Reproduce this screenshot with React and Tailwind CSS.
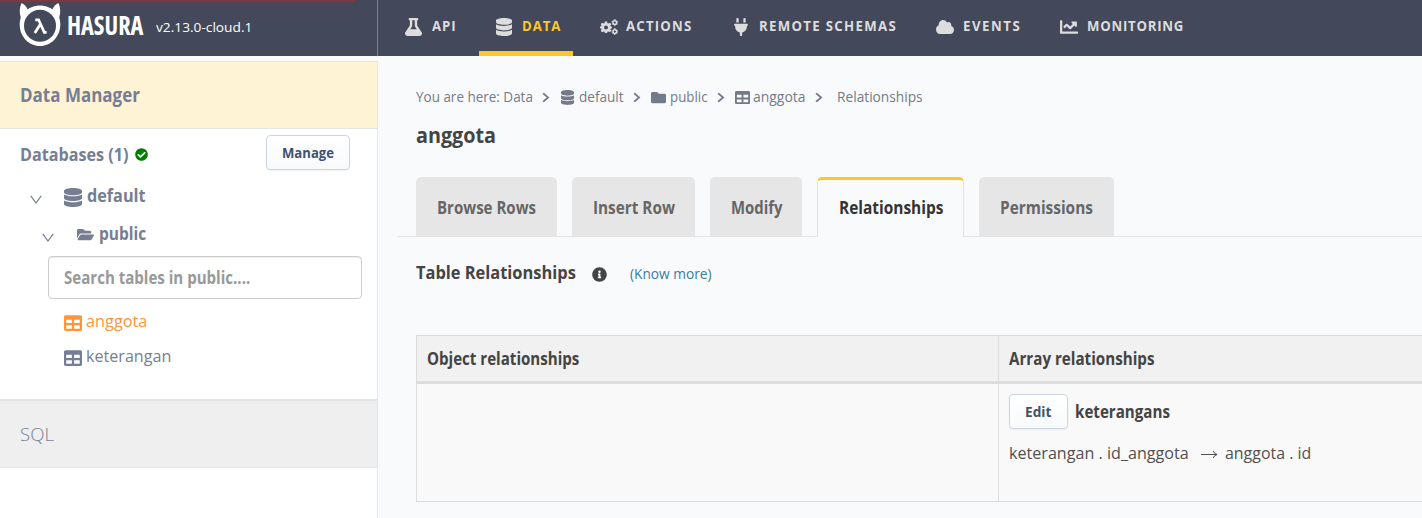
import React from 'react';
import { FaFlask, FaPlug, FaCloud } from 'react-icons/fa6';
import { FaDatabase, FaChartLine, FaChevronRight, FaFolder, FaFolderOpen, FaTable, FaInfoCircle, FaCheckCircle } from 'react-icons/fa';

/* A run of text with a fixed layout width, drawn slightly condensed or widened. */
function T({ c = '', children }) {
  return <span className={'inline-block shrink-0 origin-left whitespace-nowrap ' + c}>{children}</span>;
}

function Logo() {
  return (
    <svg viewBox="0 0 42 44" className="h-[44px] w-[42px] shrink-0" fill="#fff">
      <path d="M2.500 1C5 2 7.500 4.500 8.500 7.200C12 4.800 17 3.400 21 3.400S30 4.800 33.500 7.200C34.500 4.500 37 2 39.500 1C41.500 5.500 41.800 10.500 40.200 15.500C41 18 41.300 20 41.300 22.500C41.300 34.500 32.300 44 21 44S.7 34.500.7 22.500C.7 20 1 18 1.800 15.500C.2 10.500.5 5.500 2.500 1Z" />
      <circle cx="21" cy="23.700" r="16" fill="#43495a" />
      <path fill="none" stroke="#fff" strokeWidth="2.700" d="M16.300 17.800H19.600L25.300 30.300H27.600M21.600 21.800L15.800 31" />
    </svg>
  );
}

function Cogs({ className }) {
  return (
    <svg viewBox="0 0 18 16" className={className} fill="currentColor">
      <path fillRule="evenodd" d="M4.900 2.500H7.100L7.500 4.200L8.400 4.600L9.900 3.700L11.300 5.200L10.400 6.600L10.800 7.500L12 7.800V9.200L10.800 9.500L10.400 10.400L11.300 11.800L9.900 13.300L8.400 12.400L7.500 12.800L7.100 14H4.900L4.500 12.800L3.600 12.400L2.100 13.300L.7 11.800L1.600 10.400L1.200 9.500L0 9.200V7.500L1.200 7.200L1.600 6.500L.7 5.200L2.100 3.700L3.600 4.600L4.500 4.200ZM6 6.500A2 2 0 1 0 6 10.500A2 2 0 1 0 6 6.500Z" />
      <circle cx="14.800" cy="3.600" r="1.900" fill="none" stroke="currentColor" strokeWidth="1.500" />
      <circle cx="14.800" cy="12.600" r="1.900" fill="none" stroke="currentColor" strokeWidth="1.500" />
      <path fill="none" stroke="currentColor" strokeWidth=".9" strokeDasharray="1.200 1.500" d="M14.800.7A2.900 2.900 0 1 1 14.790.7M14.800 9.700A2.900 2.900 0 1 1 14.790 9.700" />
    </svg>
  );
}

const nav = [
  { t: 'API', I: FaFlask, w: 'w-[91px]', i: 'w-[17px] h-[18px]', b: 'w-[27px]', s: 'scale-x-[.88] tracking-[1.000px]' },
  { t: 'DATA', I: FaDatabase, w: 'w-[94px]', i: 'w-[16px] h-[18px]', b: 'w-[26px]', s: 'scale-x-[.88] tracking-[1.000px]' , on: true },
  { t: 'ACTIONS', I: Cogs, w: 'ml-[10px] w-[134px]', i: 'w-[18px] h-[16px]', b: 'w-[26px]', s: 'scale-x-[.88] tracking-[1.350px]' },
  { t: 'REMOTE SCHEMAS', I: FaPlug, w: 'w-[202px]', i: 'w-[14px] h-[18px]', b: 'w-[25px]', s: 'scale-x-[.88] tracking-[1.500px]' },
  { t: 'EVENTS', I: FaCloud, w: 'w-[124px]', i: 'w-[18px] h-[16px]', b: 'w-[27px]', s: 'scale-x-[.88] tracking-[1.750px]' },
  { t: 'MONITORING', I: FaChartLine, w: 'w-[150px]', i: 'w-[18px] h-[18px]', b: 'w-[27px]', s: 'scale-x-[.88] tracking-[.850px]' },
];

const tabs = [
  { t: 'Browse Rows', w: 'w-[141px]', s: 'scale-x-[.885]' },
  { t: 'Insert Row', w: 'w-[123px]', s: 'scale-x-[.9]' },
  { t: 'Modify', w: 'w-[92px]', s: 'scale-x-[.876]' },
  { t: 'Relationships', w: 'w-[147px]', s: 'scale-x-[.907]', on: true },
  { t: 'Permissions', w: 'w-[135px]', s: 'scale-x-[.906]' },
];

function Header() {
  return (
    <header className="relative flex h-14 bg-[#43495a]">
      <div className="flex w-[378px] border-r border-[#7b7f8c] pl-[19px]">
        <div className="pt-[2px]"><Logo /></div>
        <T c="ml-[6px] mt-[5px] h-[40px] w-[76px] text-[27px] leading-[40px] font-bold text-white [font-stretch:75%] scale-x-[.900]">HASURA</T>
        <T c="ml-[13px] mt-[17px] text-[13px] leading-[20px] text-white scale-x-[1.055]">v2.13.0-cloud.1</T>
      </div>
      <nav className="flex pl-[10px]">
        {nav.map(({ t, I, w, i, b, s, on }) => (
          <div key={t} className={'flex h-14 shrink-0 items-start pl-[17px] pt-[16px] text-[#ddd] ' + w + (on ? ' border-b-[5px] border-[#ffc627]' : '')}>
            <span className={'flex h-[22px] shrink-0 items-center ' + b}><I className={i} preserveAspectRatio="none" /></span>
            <T c={'-mt-px text-[15px] leading-5 font-bold ' + s + (on ? ' text-[#ffc627]' : '')}>{t}</T>
          </div>
        ))}
      </nav>
      <div className="absolute left-0 top-0 h-[2px] w-[355px] bg-[#7b3843] shadow-[0_0_3px_#7b3843]" />
    </header>
  );
}

function Caret() {
  return (
    <svg viewBox="0 0 12 9" className="h-[9px] w-[12px] shrink-0" fill="none" stroke="#767e93" strokeWidth="1.200"><path d="M.8.8L6 8L11.200.8" /></svg>
  );
}

const button = 'flex h-[35px] shrink-0 items-center rounded-[4px] border border-[#cbd5e1] bg-linear-to-b from-white to-[#f8fafc] text-[14px] font-bold text-[#42526a] shadow-[0_1px_2px_rgba(0,0,0,0.06)]';

function Sidebar() {
  return (
    <aside className="mt-[5px] h-[457px] w-[378px] shrink-0 border-r border-t border-[#e3e5e7] bg-white text-[#767e93]">
      <div className="flex h-[67px] items-center border-b border-[#e3e5e7] bg-[#fff3d5] pl-[20px]">
        <T c="text-[19px] leading-6 font-bold scale-x-[.894]">Data Manager</T>
      </div>
      <div className="flex h-[48px] items-center pl-[20px] pt-px">
        <T c="mt-px w-[115px] text-[18px] leading-6 font-bold scale-x-[.898]">Databases (1)</T>
        <FaCheckCircle className="mt-px size-[13px] text-[#008000]" />
        <div className={button + ' ml-[118px] mb-[2px] w-[84px] pl-[15px]'}><T c="scale-x-[.937]">Manage</T></div>
      </div>
      <div className="flex h-[37px] items-center pl-[30px]">
        <div className="w-[34px] pt-[8px]"><Caret /></div>
        <FaDatabase preserveAspectRatio="none" className="mt-[4px] h-[19px] w-[18px]" />
        <T c="-mt-px ml-[5px] text-[18px] leading-6 font-bold scale-x-[.9]">default</T>
      </div>
      <div className="flex h-[37px] items-center pl-[42px]">
        <div className="w-[35px] pt-[9px]"><Caret /></div>
        <FaFolderOpen preserveAspectRatio="none" className="mt-[3px] h-[15px] w-[17px]" />
        <T c="ml-[5px] text-[18px] leading-6 font-bold scale-x-[.860]">public</T>
      </div>
      <div className="ml-[48px] mt-[5px] flex h-[43px] w-[314px] items-center rounded-[4px] border border-[#ccc] pl-[15px] text-[17px] font-bold text-[#999] shadow-[inset_0_1px_1px_rgba(0,0,0,0.075)]">
        <T c="scale-x-[.886]">Search tables in public....</T>
      </div>
      <div className="mt-[4px] flex h-[35px] items-center pl-[64px] text-[#ff9438]">
        <FaTable className="mt-[4px] size-[18px]" />
        <T c="ml-[4px] text-[17px] leading-6 scale-x-[.958]">anggota</T>
      </div>
      <div className="flex h-[35px] items-center pl-[64px]">
        <FaTable className="mt-[4px] size-[18px]" />
        <T c="ml-[4px] text-[17px] leading-6 scale-x-[.948]">keterangan</T>
      </div>
      <div className="mt-[26px] flex h-[69px] items-center border-b border-t-2 border-[#e3e5e7] bg-[#efefef] pl-[20px]">
        <T c="text-[19px] leading-6 font-light scale-x-[.980]">SQL</T>
      </div>
    </aside>
  );
}

function Crumbs() {
  const chev = 'h-[11px] w-[8px] shrink-0';
  return (
    <div className="mt-[31px] flex h-5 items-center pl-[37.500px] text-[14px] leading-5 text-[#747b88]">
      <T c="w-[126.500px] scale-x-[.962]">You are here: Data</T>
      <FaChevronRight className={chev} preserveAspectRatio="none" />
      <FaDatabase preserveAspectRatio="none" className="ml-[11px] mt-px h-[15px] w-[13px]" />
      <T c="ml-[5px] w-[54px] scale-x-[.968]">default</T>
      <FaChevronRight className={chev} preserveAspectRatio="none" />
      <FaFolder className="ml-[10px] mt-px size-[15px]" />
      <T c="ml-[4px] w-[47px] scale-x-[.950]">public</T>
      <FaChevronRight className={chev} preserveAspectRatio="none" />
      <FaTable className="ml-[10px] mt-px size-[15px]" />
      <T c="ml-[3px] w-[62px] scale-x-[.995]">anggota</T>
      <FaChevronRight className={chev} preserveAspectRatio="none" />
      <T c="ml-[14px] scale-x-[.980]">Relationships</T>
    </div>
  );
}

function Main() {
  return (
    <main className="min-w-0 flex-1 overflow-hidden text-[#444]">
      <Crumbs />
      <div className="mt-[12px] flex h-[30px] items-center pl-[38px]">
        <T c="text-[22px] leading-[30px] font-bold scale-x-[.898]">anggota</T>
      </div>
      <div className="ml-[19px] mt-[28px] flex h-[60px] gap-[15px] border-b border-[#e1e3e5] pl-[19px]">
        {tabs.map(({ t, w, s, on }) => (
          <div key={t} className={'flex items-center rounded-t-[5px] text-[17px] font-bold ' + w + (on ? ' -mb-px h-[60px] border-x border-t-[3px] border-x-[#e1e3e5] border-t-[#ffc627] bg-[#f9fafc] pb-[2px] pl-[20.500px] text-[#333]' : ' h-[59px] bg-[#e6e6e6] pl-[21px] pt-[3px] text-[#666]')}>
            <T c={s}>{t}</T>
          </div>
        ))}
      </div>
      <div className="mt-[24px] flex h-[24px] items-center pl-[38px]">
        <T c="-mt-[2px] w-[176px] text-[17.500px] leading-6 font-bold scale-x-[.938]">Table Relationships</T>
        <FaInfoCircle className="mt-[3px] size-[15px]" />
        <T c="ml-[23px] mt-[2px] text-[14px] leading-5 text-[#3a7ba0] scale-x-[.980]">(Know more)</T>
      </div>
      <div className="ml-[38px] mt-[50px] grid w-[1166px] grid-cols-[582px_1fr] border border-[#ddd] bg-[#f9f9f9] text-[17px]">
        <div className="flex h-[48px] items-center border-b-[3px] border-r border-[#ddd] bg-[#f1f1f1] pl-[10px] font-bold"><T c="scale-x-[.888]">Object relationships</T></div>
        <div className="flex h-[48px] items-center border-b-[3px] border-[#ddd] bg-[#f1f1f1] pl-[10px] font-bold"><T c="scale-x-[.892]">Array relationships</T></div>
        <div className="h-[117px] border-r border-[#ddd]" />
        <div className="h-[117px] pl-[10px] pt-[10px]">
          <div className="flex items-center">
            <div className={button + ' w-[59px] pl-[15px]'}><T c="-mt-px scale-x-[.978]">Edit</T></div>
            <T c="ml-[7px] font-bold scale-x-[.890]">keterangans</T>
          </div>
          <div className="mt-[12px] flex h-6 items-center text-[16.500px] text-[#505050]">
            <T c="w-[192px] scale-x-[.977]">keterangan . id_anggota</T>
            <svg viewBox="0 0 18 9" className="mt-[3px] h-[9px] w-[17px]" fill="none" stroke="#444" strokeWidth="1"><path d="M0 4.500H17M13 .8Q14 3.800 17 4.500Q14 5.200 13 8.200" /></svg>
            <T c="ml-[7px] scale-x-[.965]">anggota . id</T>
          </div>
        </div>
      </div>
    </main>
  );
}

export default function App() {
  return (
    <div className="h-[518px] w-[1422px] overflow-hidden bg-[#f9fafc] font-['Open_Sans','Noto_Sans',sans-serif]">
      <Header />
      <div className="flex">
        <Sidebar />
        <Main />
      </div>
    </div>
  );
}
